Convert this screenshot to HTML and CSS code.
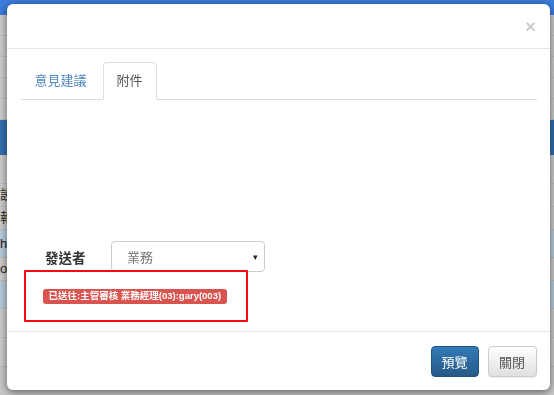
FILE: index.html
```html
<!DOCTYPE html>
<html lang="zh-TW">
<head>
    <meta charset="UTF-8">
    <meta name="viewport" content="width=device-width, initial-scale=1.0">
    <title>附件</title>
    <link rel="stylesheet" href="styles.css">
</head>
<body>

<!-- 背景頁面 (被遮罩蓋住) -->
<div class="page">
    <div class="page-top"></div>
    <div class="page-row"></div>
    <div class="page-row"></div>
    <div class="page-row"></div>
    <div class="page-row"></div>
    <div class="page-row"></div>
    <div class="page-head"></div>
    <div class="page-row page-tall"></div>
    <div class="page-row page-text">設計</div>
    <div class="page-row page-text">報表</div>
    <div class="page-row page-info">hr</div>
    <div class="page-row page-text">ov</div>
    <div class="page-row page-info"></div>
    <div class="page-row page-tall"></div>
    <div class="page-row page-tall"></div>
</div>

<div class="backdrop">
    <div class="modal">
        <div class="modal-header">
            <button class="close">&times;</button>
        </div>
        <div class="modal-body">
            <ul class="nav-tabs">
                <li><a href="#">意見建議</a></li>
                <li class="active"><a href="#">附件</a></li>
            </ul>
            <div class="tab-content"></div>
            <div class="form-row">
                <label class="form-label">發送者</label>
                <div class="select">業務<span class="caret">&#9662;</span></div>
            </div>
            <div class="status">
                <span class="label-danger">已送往:主管審核 業務經理(03):gary(003)</span>
            </div>
            <div class="mark"></div>
        </div>
        <div class="modal-footer">
            <button class="btn btn-primary">預覽</button>
            <button class="btn btn-default">關閉</button>
        </div>
    </div>
</div>

</body>
</html>
```

FILE: styles.css
```css
body {
    margin: 0;
    height: 395px;
    overflow: hidden;
    font-family: "Liberation Sans", "Noto Sans CJK TC", sans-serif;
    font-size: 12.6px;
    color: #333;
    background-color: #c9c9c9;
}
/* 背景頁面 */
.page {
    display: flex;
    flex-direction: column;
}
.page-top {
    height: 15px;
    background-color: #3c7ddc;
}
.page-row {
    height: 20px;
    line-height: 20px;
    border-bottom: 1px solid #bdbdbd;
    background-color: #cdcdcd;
    font-size: 13px;
    color: #222;
    white-space: nowrap;
}
.page-tall {
    height: 28px;
}
.page-text {
    height: 22px;
    line-height: 22px;
}
.page-head {
    height: 35px;
    background-color: #3470ae;
}
.page-info {
    height: 27px;
    line-height: 27px;
    background-color: #b9cddd;
}
/* 遮罩與視窗 */
.backdrop {
    position: fixed;
    inset: 0;
    padding: 4px 4px 5px 7px;
    display: flex;
}
.modal {
    flex: 1;
    display: flex;
    flex-direction: column;
    background-color: #fff;
    border-radius: 6px;
    box-shadow: 0 2px 8px rgba(0, 0, 0, .55);
}
.modal-header {
    height: 44px;
    border-bottom: 1px solid #e5e5e5;
    display: flex;
    justify-content: flex-end;
    align-items: center;
    padding-right: 14px;
}
.close {
    border: none;
    background: none;
    padding: 0;
    font-family: "Liberation Sans", sans-serif;
    font-size: 19px;
    font-weight: bold;
    line-height: 1;
    color: #000;
    opacity: .2;
    cursor: pointer;
}
.modal-body {
    flex: 1;
    position: relative;
    display: flex;
    flex-direction: column;
    padding: 13px 13.5px 0;
}
.nav-tabs {
    display: flex;
    list-style: none;
    margin: 0;
    padding: 0;
    border-bottom: 1px solid #ddd;
}
.nav-tabs li {
    margin-right: 2px;
    margin-bottom: -1px;
}
.nav-tabs a {
    display: block;
    padding: 9px 13px;
    line-height: 18px;
    font-size: 13px;
    color: #5288c4;
    text-decoration: none;
    border: 1px solid transparent;
    border-radius: 4px 4px 0 0;
}
.nav-tabs .active a {
    color: #555;
    background-color: #fff;
    border-color: #ddd #ddd transparent;
}
.tab-content {
    height: 141px;
}
.form-row {
    display: flex;
    align-items: center;
    height: 31px;
}
.form-label {
    width: 66px;
    margin-left: 24.5px;
    font-size: 13.5px;
    font-weight: bold;
    color: #333;
}
.select {
    box-sizing: border-box;
    width: 154px;
    height: 31px;
    display: flex;
    align-items: center;
    justify-content: space-between;
    padding: 0 6px 0 15px;
    border: 1px solid #ccc;
    border-radius: 4px;
    font-size: 13px;
    color: #777;
}
.caret {
    font-size: 9px;
    color: #222;
}
.status {
    margin-top: 16px;
    padding-left: 22.5px;
}
.label-danger {
    display: inline-block;
    padding: 1px 5.5px 2px;
    font-size: 9.5px;
    line-height: 12px;
    font-weight: bold;
    color: #fff;
    background-color: #d9534f;
    border-radius: 3px;
    white-space: nowrap;
}
/* 紅框標示 */
.mark {
    position: absolute;
    left: 17px;
    top: 221px;
    width: 220px;
    height: 48px;
    border: 2px solid #f20c0c;
    border-radius: 1px;
}
.modal-footer {
    display: flex;
    justify-content: flex-end;
    gap: 9px;
    padding: 13.5px;
    border-top: 1px solid #e5e5e5;
}
.btn {
    height: 31px;
    padding: 0 10px;
    font-family: "Liberation Sans", "Noto Sans CJK TC", sans-serif;
    font-size: 13px;
    border-radius: 4px;
    border: 1px solid #ccc;
    cursor: pointer;
}
.btn-primary {
    width: 48px;
    color: #fff;
    border-color: #245580;
    background-image: linear-gradient(#337ab7, #265a88);
}
.btn-default {
    width: 49px;
    color: #555;
    background-image: linear-gradient(#fff, #e0e0e0);
    box-shadow: 0 1px 1px rgba(0, 0, 0, .08);
}
```
